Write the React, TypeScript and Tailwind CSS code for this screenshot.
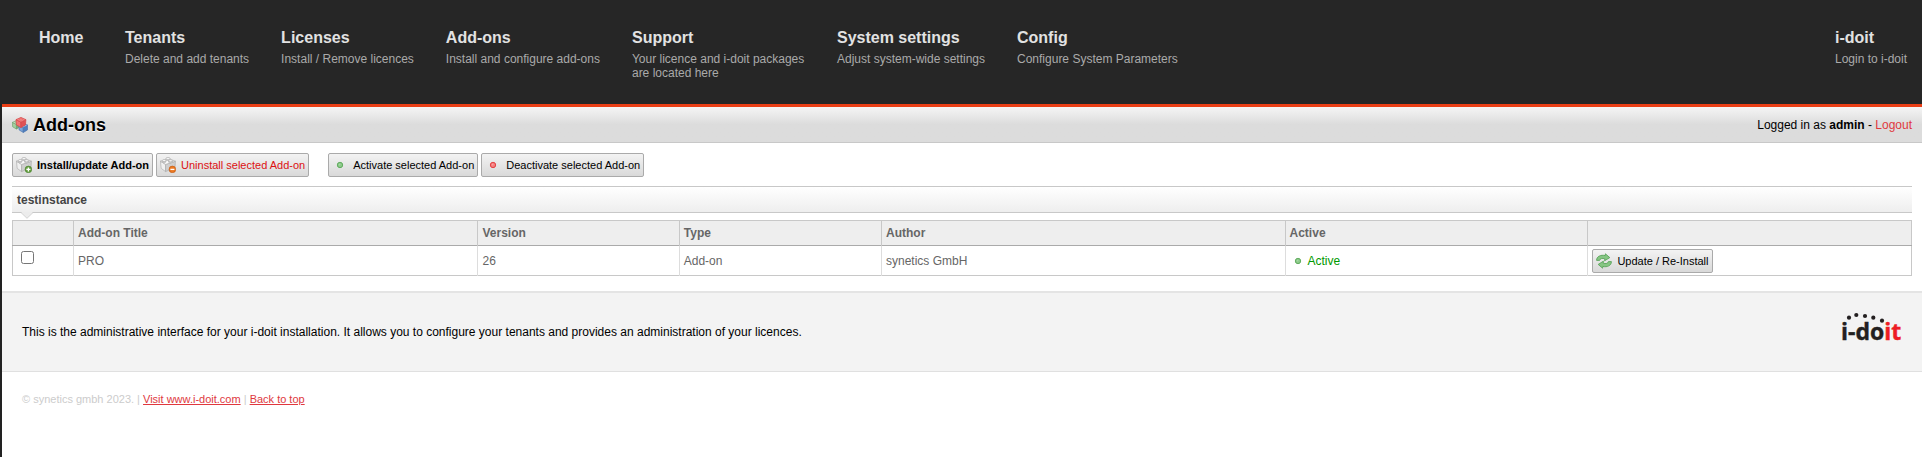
import React from "react";

type NavItem = { title: string; text?: string; className?: string };

const navItems: NavItem[] = [
  { title: "Home", className: "min-w-[54px]" },
  { title: "Tenants", text: "Delete and add tenants" },
  { title: "Licenses", text: "Install / Remove licences" },
  { title: "Add-ons", text: "Install and configure add-ons" },
  { title: "Support", text: "Your licence and i-doit packages are located here", className: "w-[173px]" },
  { title: "System settings", text: "Adjust system-wide settings" },
  { title: "Config", text: "Configure System Parameters" },
];

function NavLink({ title, text, className = "" }: NavItem) {
  return (
    <a href="#" className={`block ${className}`}>
      <span className="block text-[16px] leading-[18px] font-bold text-[#e2e2e2]">{title}</span>
      {text && <span className="mt-[5px] block text-[12px] leading-[14px] text-[#aaaaaa]">{text}</span>}
    </a>
  );
}

type CubeProps = { x: number; y: number; s: number; top: string; left: string; right: string; line: string };

function Cube({ x, y, s, top, left, right, line }: CubeProps) {
  return (
    <g transform={`translate(${x} ${y}) scale(${s})`} stroke={line} strokeWidth="0.7" strokeLinejoin="round">
      <path d="M0 2.4 4.5 4.6V9.6L0.4 7.2Z" fill={left} />
      <path d="M9 2.4 4.5 4.6V9.6L8.6 7.2Z" fill={right} />
      <path d="M0 2.4 4.5 0.4 9 2.4 4.5 4.6Z" fill={top} />
      <ellipse cx="4.5" cy="2" rx="1.7" ry="0.9" fill={top} strokeWidth="0.4" />
    </g>
  );
}

function BricksIcon() {
  return (
    <svg width="16" height="16" viewBox="0 0 16 16" aria-hidden="true">
      <Cube x={0.3} y={3.2} s={0.92} top="#c4e2c0" left="#a3cf9f" right="#79ab76" line="#6c9f6a" />
      <Cube x={6.8} y={5.8} s={1} top="#a9c6ea" left="#7ea6d8" right="#4f7fbe" line="#4a76b0" />
      <Cube x={4} y={0} s={1.1} top="#f68a88" left="#f07472" right="#e05254" line="#d8494a" />
    </svg>
  );
}

function BrickIcon({ mode }: { mode: "add" | "remove" }) {
  const add = mode === "add";
  return (
    <svg width="16" height="16" viewBox="0 0 16 16" aria-hidden="true">
      <g stroke="#a6a6a6" strokeWidth="0.6" strokeLinejoin="round">
        <path d="M0.4 4.2 5.6 7.4V14.6L1.2 11.4Z" fill="#f0f0f0" />
        <path d="M15.4 4.2 5.6 7.4V14.6L15 10.6Z" fill="#cfcfcf" />
        <path d="M0.4 4.2 8.6 1.6 15.4 4.2 5.6 7.4Z" fill="#fafafa" />
        <path d="M6 1.6V3C6.6 3.8 9.4 3.8 10 3V1.6Z" fill="#dcdcdc" />
        <ellipse cx="8" cy="1.4" rx="2" ry="1" fill="#ffffff" />
        <path d="M2.3 3.7V5C2.9 5.9 5.3 5.9 5.9 5V3.7Z" fill="#dcdcdc" />
        <ellipse cx="4.1" cy="3.6" rx="1.8" ry="1" fill="#ffffff" />
        <path d="M8.6 3.9V5.2C9.2 6.1 12 6.1 12.6 5.2V3.9Z" fill="#dcdcdc" />
        <ellipse cx="10.6" cy="3.8" rx="2" ry="1" fill="#ffffff" />
      </g>
      <circle cx="12.4" cy="12.4" r="3.3" fill={add ? "#68a343" : "#ec7a24"} stroke={add ? "#437a2a" : "#bd560f"} strokeWidth="0.6" />
      <path d={add ? "M12.4 10.4V14.4M10.4 12.4H14.4" : "M10.4 12.4H14.4"} stroke="#ffffff" strokeWidth="1.3" />
    </svg>
  );
}

function DotIcon({ color }: { color: "green" | "red" }) {
  const green = color === "green";
  return (
    <svg width="16" height="16" viewBox="0 0 16 16" aria-hidden="true">
      <circle cx="8" cy="8" r="2.7" fill={green ? "#8ac888" : "#f37c7c"} stroke={green ? "#5aa858" : "#e23a3c"} strokeWidth="0.9" />
      <circle cx="7.6" cy="7.6" r="0.9" fill={green ? "#a6d8a4" : "#f9a3a3"} />
    </svg>
  );
}

function RefreshIcon() {
  return (
    <svg width="16" height="16" viewBox="0 0 16 16" aria-hidden="true">
      <g fill="#86c683" stroke="#529e53" strokeWidth="0.8" strokeLinejoin="round">
        <path d="M0.6 7.4C0.4 3.6 4.8 1.4 9.2 2.6L9.4 0.8 13.8 4.6 8.6 7.8 8.8 5.8C6.4 5 4.2 5.4 3.6 7.4Z" />
        <path d="M15.4 8.6C15.6 12.4 11.2 14.6 6.8 13.4L6.6 15.2 2.2 11.4 7.4 8.2 7.2 10.2C9.6 11 11.8 10.6 12.4 8.6Z" />
      </g>
    </svg>
  );
}

type ToolButtonProps = { icon: React.ReactNode; children: React.ReactNode; className?: string };

function ToolButton({ icon, children, className = "" }: ToolButtonProps) {
  return (
    <button
      type="button"
      className={`flex h-6 items-center gap-[5px] rounded-xs border border-[#aaaaaa] bg-linear-to-b from-[#f3f3f3] to-[#d9d9d9] px-[3px] text-[11px] leading-[14px] whitespace-nowrap ${className}`}
    >
      {icon}
      <span>{children}</span>
    </button>
  );
}

function Logo() {
  return (
    <svg className="overflow-visible" width="66" height="36" viewBox="0 0 66 36" role="img" aria-label="i-doit">
      <g fill="#231f20">
        <circle cx="7" cy="5.7" r="2.1" />
        <circle cx="14.3" cy="3" r="2.1" />
        <circle cx="23" cy="4" r="2.1" />
        <circle cx="31.3" cy="5.7" r="2.1" />
        <circle cx="40" cy="8.7" r="2.1" />
      </g>
      <text x="-1" y="28" fontFamily="'Open Sans', sans-serif" fontSize="23" fontWeight="700" fill="#231f20" stroke="#231f20" strokeWidth="0.4">
        i-do
        <tspan fill="#ed1c24" stroke="#ed1c24">
          it
        </tspan>
      </text>
    </svg>
  );
}

const headings = ["Add-on Title", "Version", "Type", "Author", "Active"];

export default function App() {
  return (
    <div className="min-h-screen border-l-2 border-[#222222] bg-white font-['Liberation_Sans',Arial,sans-serif] text-[12px] leading-[14px] text-black">
      <header className="-ml-0.5 bg-[#262626] pl-0.5">
        <nav className="flex min-h-[104px] gap-8 pt-[29px] pr-[15px] pl-[37px]">
          {navItems.map((item) => (
            <NavLink key={item.title} {...item} />
          ))}
          <div className="ml-auto">
            <NavLink title="i-doit" text="Login to i-doit" />
          </div>
        </nav>
      </header>

      <div className="flex h-[39px] items-center justify-between border-t-3 border-b border-t-[#ea3e15] border-b-[#c8c8c8] bg-linear-to-b from-[#f5f5f5] to-[#dcdcdc] to-50% px-[10px]">
        <h1 className="flex items-center gap-[5px] text-[18px] leading-5 font-bold [text-shadow:0_1px_0_#fff]">
          <BricksIcon />
          Add-ons
        </h1>
        <p>
          Logged in as <strong>admin</strong> -{" "}
          <a href="#" className="text-[#e0383e]">
            Logout
          </a>
        </p>
      </div>

      <main className="px-[10px] pt-[10px] pb-[15px]">
        <div className="flex gap-[3px]">
          <ToolButton icon={<BrickIcon mode="add" />} className="font-bold">
            Install/update Add-on
          </ToolButton>
          <ToolButton icon={<BrickIcon mode="remove" />} className="mr-4 text-[#dd1111]">
            Uninstall selected Add-on
          </ToolButton>
          <ToolButton icon={<DotIcon color="green" />}>Activate selected Add-on</ToolButton>
          <ToolButton icon={<DotIcon color="red" />}>Deactivate selected Add-on</ToolButton>
        </div>

        <div className="relative mt-[9px] border-y border-[#c8c8c8] bg-linear-to-b from-white to-[#eeeeee] px-[5px] pt-1.5 pb-[5px]">
          <h2 className="font-bold text-[#444444]">testinstance</h2>
          <svg className="absolute top-full left-[9px]" width="12" height="7" viewBox="0 0 12 7" aria-hidden="true">
            <path d="M0 0H12L6 6Z" fill="#ececec" />
            <path d="M0 0.5 6 6.3 12 0.5" fill="none" stroke="#d0d0d0" />
          </svg>
        </div>

        <table className="mt-[7px] w-full table-fixed border-collapse border border-[#c8c8c8] text-left text-[#666666]">
          <colgroup>
            <col className="w-[61px]" />
            <col className="w-[21.3%]" />
            <col className="w-[10.6%]" />
            <col className="w-[10.65%]" />
            <col className="w-[21.25%]" />
            <col className="w-[15.95%]" />
            <col />
          </colgroup>
          <thead>
            <tr className="h-[25px] border-b border-[#aaaaaa] bg-[#eeeeee]">
              <td className="border-r border-r-[#c8c8c8]" />
              {headings.map((heading) => (
                <th key={heading} scope="col" className="border-r border-r-[#c8c8c8] px-1 font-bold">
                  {heading}
                </th>
              ))}
              <td />
            </tr>
          </thead>
          <tbody>
            <tr className="h-[30px]">
              <td className="border-r border-[#dddddd] px-2 align-top">
                <input type="checkbox" aria-label="Select PRO" className="mt-[5px] block size-[13px]" />
              </td>
              <td className="border-r border-[#dddddd] px-1">PRO</td>
              <td className="border-r border-[#dddddd] px-1">26</td>
              <td className="border-r border-[#dddddd] px-1">Add-on</td>
              <td className="border-r border-[#dddddd] px-1">synetics GmbH</td>
              <td className="border-r border-[#dddddd] px-1 text-[#009900]">
                <span className="flex items-center gap-0.5">
                  <DotIcon color="green" />
                  Active
                </span>
              </td>
              <td className="px-1">
                <ToolButton icon={<RefreshIcon />} className="text-black">
                  Update / Re-Install
                </ToolButton>
              </td>
            </tr>
          </tbody>
        </table>
      </main>

      <section className="flex h-[81px] items-center justify-between border-t-2 border-b border-t-[#e4e4e4] border-b-[#e0e0e0] bg-[#f3f3f3] pr-[14px] pl-5">
        <p>
          This is the administrative interface for your i-doit installation. It allows you to configure your tenants and
          provides an administration of your licences.
        </p>
        <div className="pb-1">
          <Logo />
        </div>
      </section>

      <footer className="px-5 pt-5 text-[11px] text-[#cccccc]">
        © synetics gmbh 2023. |{" "}
        <a href="#" className="text-[#e0383e] underline">
          Visit www.i-doit.com
        </a>{" "}
        |{" "}
        <a href="#" className="text-[#e0383e] underline">
          Back to top
        </a>
      </footer>
    </div>
  );
}
